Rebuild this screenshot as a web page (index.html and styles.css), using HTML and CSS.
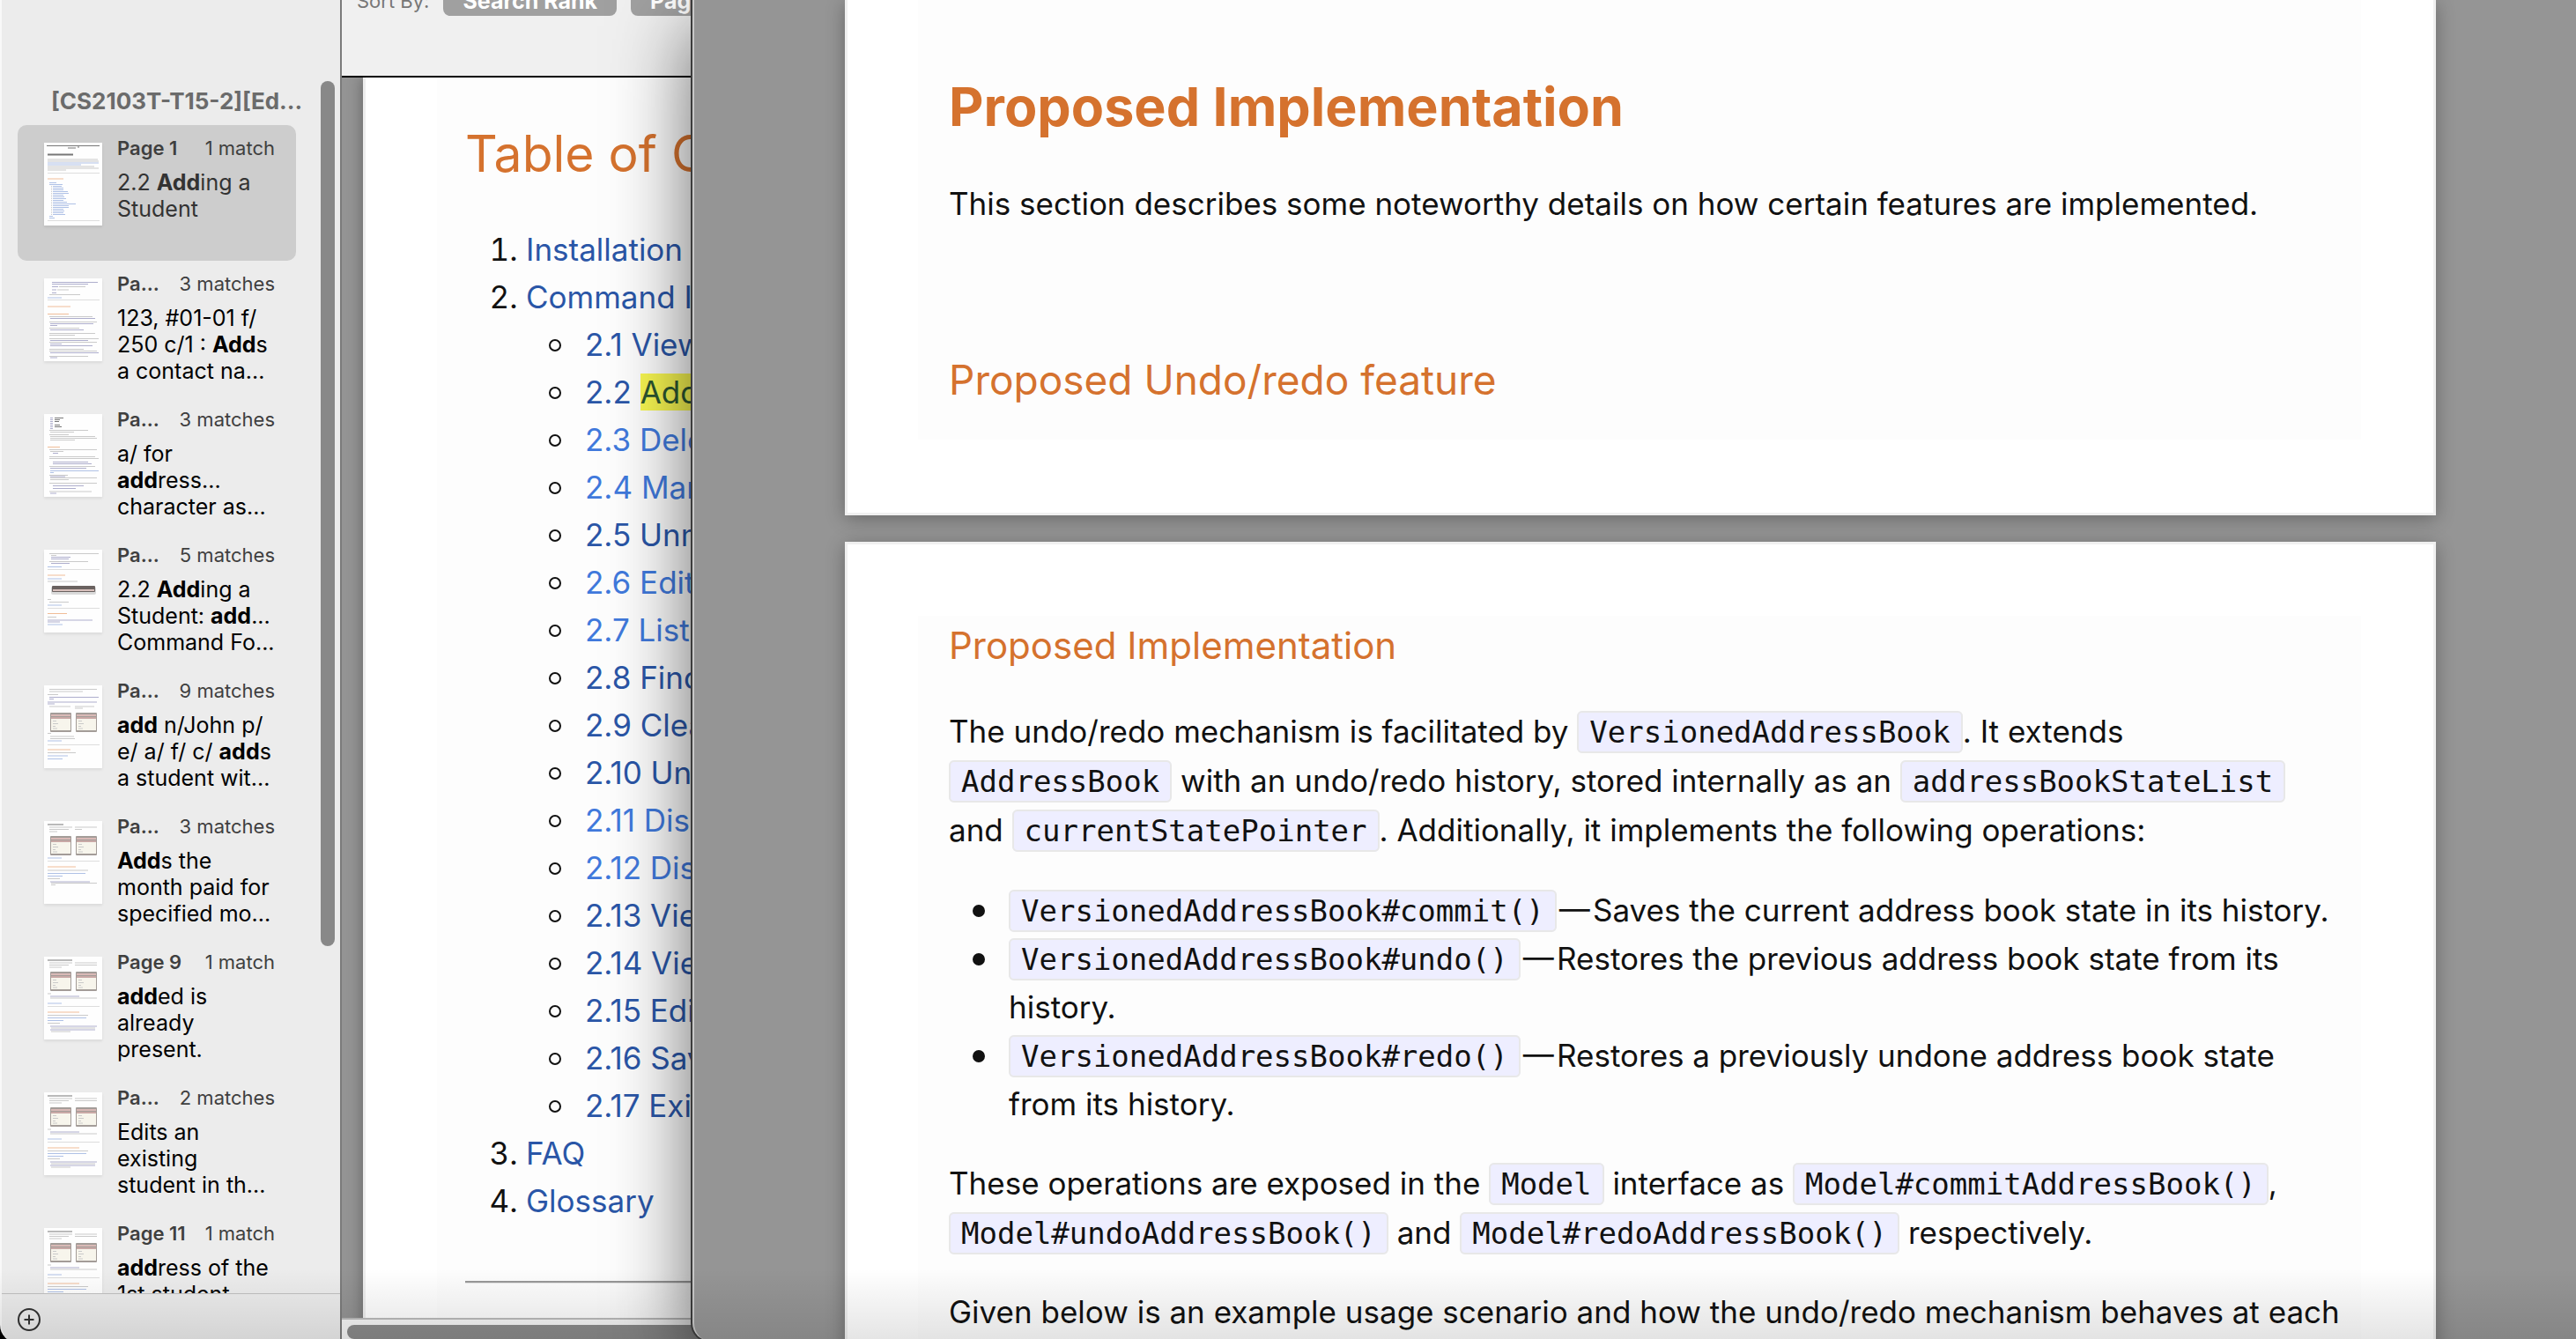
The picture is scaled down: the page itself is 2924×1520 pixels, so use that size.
FILE: index.html
```html
<!DOCTYPE html>
<html lang="en">
<head>
<meta charset="utf-8">
<title>Preview</title>
<link rel="stylesheet" href="styles.css">
</head>
<body>
<svg class="defs" aria-hidden="true">
  <symbol id="thumb-toc" viewBox="0 0 66 94">
    <path class="t-dark" d="M3 3.5H63"/>
    <path class="t-bold" d="M27 6H36M38 5H40"/>
    <path class="t-bold wide" d="M4 13.5H33"/>
    <path class="t-text" d="M4 19H61M4 21H62M4 27H57M4 29H62M4 31H25"/>
    <path class="t-link" d="M4 23H62M4 25H42"/>
    <path class="t-rule" d="M4 34.5H63M4 88.5H63"/>
    <path class="t-head" d="M4 41H22"/>
    <path class="t-link" d="M6 45.5H14M6 47.5H21M10 49.5H20M10 51.5H22M10 53.5H22M10 55.5H27M10 57.5H28M10 59.5H22M10 61.5H23M10 63.5H25M10 65.5H22M10 67.5H26M10 69.5H36M10 71.5H28M10 73.5H28M10 75.5H22M10 77.5H23M10 79.5H22M10 81.5H24M6 83.5H10M6 85.5H12"/>
    <path class="t-text" d="M8 49.5H9M8 51.5H9M8 53.5H9M8 55.5H9M8 57.5H9M8 59.5H9M8 61.5H9M8 63.5H9M8 65.5H9M8 67.5H9M8 69.5H9M8 71.5H9M8 73.5H9M8 75.5H9M8 77.5H9M8 79.5H9M8 81.5H9"/>
  </symbol>
  <symbol id="thumb-text" viewBox="0 0 66 94">
    <path class="t-code" d="M9 4.500H61M9 6.500H50M9 9.500H16M9 13H14M9 16.500H14"/>
    <path class="t-text" d="M17 9.500H47M15 13H28M6 18.500H41"/>
    <path class="t-link" d="M4 22H20"/>
    <path class="t-rule" d="M4 24.500H63"/>
    <path class="t-head" d="M4 32H30M4 40.500H28"/>
    <path class="t-text" d="M6 43.500H55M6 49.500H60M6 56.500H40M6 62.500H58M6 64.500H35M6 68.500H62M6 72.500H60M6 80.500H45M6 82.500H60M6 88.500H50"/>
    <path class="t-code" d="M7 45.500H58M7 51.500H56M7 53.500H15M7 58.500H45M7 70.500H50M7 74.500H20M7 76.500H55M7 84.500H62M7 90H15"/>
  </symbol>
  <symbol id="thumb-notes" viewBox="0 0 66 94">
    <path class="t-code" d="M7 4.500H10M7 6.500H10M7 8.500H10M7 10.500H10M7 12.500H10M7 14.500H10M7 16.500H10"/>
    <path class="t-bold" d="M12 4.500H22M12 6.500H18M12 8.500H17M12 12.500H18M12 14.500H20"/>
    <path class="t-text" d="M6 18.500H50M7 20.500H34M6 23.500H28M7 25.500H58M7 27.500H60M7 29.500H35"/>
    <path class="t-head" d="M4 37.500H18"/>
    <path class="t-text" d="M6 40.500H60M7 42.500H22M6 48.500H58M6 50.500H62M6 59.500H58M6 69.500H27M7 72.500H60M7 74.500H28M6 78.500H60M6 88H54"/>
    <path class="t-code" d="M10 44.500H16M10 54.500H50M10 56.500H54M7 61.500H48M7 71H24M10 81.500H45M10 84.500H36M7 90H14"/>
    <path class="t-link" d="M7 64.500H62M7 66.500H11"/>
  </symbol>
  <symbol id="thumb-bar" viewBox="0 0 66 94">
    <path class="t-text" d="M6 4.500H62M8 6.500H14M6 13.500H50"/>
    <path class="t-code" d="M8 8.500H30M8 10.500H28M8 15.500H29"/>
    <path class="t-link" d="M4 19.500H20M4 33H20M4 63H20M4 85H21"/>
    <path class="t-rule" d="M4 22.500H63M4 66.500H63"/>
    <path class="t-head" d="M4 29H24M4 72.500H26"/>
    <path class="t-text" d="M4 36H38M4 56.500H8M6 59.500H28M4 76.500H14"/>
    <rect x="8" y="42" width="51" height="9" rx="2" fill="#999" opacity=".35"/>
    <rect x="9" y="41" width="49" height="7" rx="1" fill="#6a6260"/>
    <path d="M10 46H57" stroke="#d8c0bc" stroke-width="2"/>
    <path class="t-code" d="M4 80H55M4 82H18"/>
  </symbol>
  <symbol id="windows" viewBox="0 0 66 24">
    <g id="mini-window">
      <rect x="7" y="1" width="24" height="22" rx="1" fill="#a39c98"/>
      <rect x="8" y="3" width="22" height="2" fill="#d9b9b6"/>
      <rect x="8" y="6" width="22" height="2" fill="#c9a8a6"/>
      <rect x="8" y="8" width="22" height="13" fill="#f7f5ec"/>
      <path class="t-text" d="M10 10.500H14M10 13.500H16M10 16.500H13M10 19H15"/>
    </g>
    <use href="#mini-window" x="29"/>
  </symbol>
  <symbol id="thumb-shots-a" viewBox="0 0 66 94">
    <path class="t-text" d="M6 4.500H60M6 7H44M4 10.500H16M6 24H30M35 24H57M35 26H44M4 54.500H8M7 58H34M7 60.500H35M4 76.500H36"/>
    <path class="t-code" d="M6 13.500H62M6 15.500H11M4 19H60M4 21H12"/>
    <use href="#windows" y="30" width="66" height="24"/>
    <path class="t-link" d="M4 63H20M4 80H27M4 83.500H21"/>
    <path class="t-rule" d="M4 67.500H63"/>
    <path class="t-head" d="M4 73H30"/>
  </symbol>
  <symbol id="thumb-shots-b" viewBox="0 0 66 94">
    <path class="t-bold" d="M4 4H22"/>
    <path class="t-text" d="M6 7H32M35 7H60M6 9.500H28M35 9.500H43M6 12H15M4 56H50M4 65.500H18M8 70.500H60M8 72.500H13"/>
    <use href="#windows" y="16" width="66" height="24"/>
    <path class="t-link" d="M4 42H20M4 59.500H47M4 62.500H21"/>
    <path class="t-rule" d="M4 45.500H63"/>
    <path class="t-head" d="M4 52H36"/>
    <path class="t-code" d="M7 69H52"/>
  </symbol>
  <symbol id="thumb-shots-c" viewBox="0 0 66 94">
    <path class="t-bold" d="M4 4H32"/>
    <path class="t-text" d="M6 7H32M35 7H60M6 9.500H28M35 9.500H60M6 12H20M4 42H8M7 47H60M4 66.500H50M4 75.500H18M8 81H58M8 85H30"/>
    <use href="#windows" y="16" width="66" height="24"/>
    <path class="t-link" d="M4 53H20M4 69.500H48M4 72.500H22"/>
    <path class="t-rule" d="M4 56.500H63"/>
    <path class="t-head" d="M4 63H40"/>
    <path class="t-code" d="M7 45H40M7 79H60M7 83H58"/>
  </symbol>
</svg>

<div class="back-window">
  <aside class="sidebar">
    <div class="results">
      <h2 class="doc-name">[CS2103T-T15-2][Ed...</h2>
      <button class="result selected">
        <svg class="thumb"><use href="#thumb-toc"/></svg>
        <span class="info"><span class="meta"><b>Page 1</b><span>1 match</span></span>
        <span class="snippet">2.2 <b>Add</b>ing a<br>Student</span></span>
      </button>
      <button class="result">
        <svg class="thumb"><use href="#thumb-text"/></svg>
        <span class="info"><span class="meta"><b>Pa...</b><span>3 matches</span></span>
        <span class="snippet">123, #01-01 f/<br>250 c/1 : <b>Add</b>s<br>a contact na...</span></span>
      </button>
      <button class="result">
        <svg class="thumb"><use href="#thumb-notes"/></svg>
        <span class="info"><span class="meta"><b>Pa...</b><span>3 matches</span></span>
        <span class="snippet">a/ for<br><b>add</b>ress...<br>character as...</span></span>
      </button>
      <button class="result">
        <svg class="thumb"><use href="#thumb-bar"/></svg>
        <span class="info"><span class="meta"><b>Pa...</b><span>5 matches</span></span>
        <span class="snippet">2.2 <b>Add</b>ing a<br>Student: <b>add</b>...<br>Command Fo...</span></span>
      </button>
      <button class="result">
        <svg class="thumb"><use href="#thumb-shots-a"/></svg>
        <span class="info"><span class="meta"><b>Pa...</b><span>9 matches</span></span>
        <span class="snippet"><b>add</b> n/John p/<br>e/ a/ f/ c/ <b>add</b>s<br>a student wit...</span></span>
      </button>
      <button class="result">
        <svg class="thumb"><use href="#thumb-shots-b"/></svg>
        <span class="info"><span class="meta"><b>Pa...</b><span>3 matches</span></span>
        <span class="snippet"><b>Add</b>s the<br>month paid for<br>specified mo...</span></span>
      </button>
      <button class="result">
        <svg class="thumb"><use href="#thumb-shots-c"/></svg>
        <span class="info"><span class="meta"><b>Page 9</b><span>1 match</span></span>
        <span class="snippet"><b>add</b>ed is<br>already<br>present.</span></span>
      </button>
      <button class="result">
        <svg class="thumb"><use href="#thumb-shots-c"/></svg>
        <span class="info"><span class="meta"><b>Pa...</b><span>2 matches</span></span>
        <span class="snippet">Edits an<br>existing<br>student in th...</span></span>
      </button>
      <button class="result">
        <svg class="thumb"><use href="#thumb-shots-c"/></svg>
        <span class="info"><span class="meta"><b>Page 11</b><span>1 match</span></span>
        <span class="snippet"><b>add</b>ress of the<br>1st student</span></span>
      </button>
    </div>
    <div class="scroll-thumb"></div>
    <footer class="sidebar-footer">
      <button class="add" aria-label="Add">
        <svg viewBox="0 0 26 26"><circle cx="13" cy="13" r="12"/><path d="M13 7.500V18.500M7.500 13H18.500"/></svg>
      </button>
    </footer>
  </aside>

  <main class="reader">
    <div class="toolbar">
      <span class="sort-label">Sort By:</span>
      <button class="sort">Search Rank</button>
      <button class="sort">Page Order</button>
    </div>
    <div class="canvas">
      <article class="guide">
        <div class="guide-body">
          <h1>Table of Contents</h1>
          <ol>
            <li><a href="#">Installation</a></li>
            <li><a href="#">Command Instructions</a>
              <ul>
                <li><a href="#">2.1 Viewing help</a></li>
                <li><a href="#">2.2 <mark>Add</mark>ing a Student</a></li>
                <li><a href="#" class="light">2.3 Deleting a Student</a></li>
                <li><a href="#" class="light">2.4 Marking a payment</a></li>
                <li><a href="#">2.5 Unmarking a payment</a></li>
                <li><a href="#" class="light">2.6 Editing a Student</a></li>
                <li><a href="#" class="light">2.7 Listing all Students</a></li>
                <li><a href="#">2.8 Finding a Student</a></li>
                <li><a href="#">2.9 Clearing all data</a></li>
                <li><a href="#">2.10 Undoing a command</a></li>
                <li><a href="#" class="light">2.11 Displaying payments</a></li>
                <li><a href="#" class="light">2.12 Displaying fees</a></li>
                <li><a href="#">2.13 Viewing a Student</a></li>
                <li><a href="#">2.14 Viewing history</a></li>
                <li><a href="#">2.15 Editing the data file</a></li>
                <li><a href="#">2.16 Saving the data</a></li>
                <li><a href="#">2.17 Exiting the program</a></li>
              </ul>
            </li>
            <li><a href="#">FAQ</a></li>
            <li><a href="#">Glossary</a></li>
          </ol>
          <hr>
        </div>
      </article>
    </div>
    <div class="h-track"><div class="h-thumb"></div></div>
  </main>
</div>

<section class="front-window">
  <article class="sheet first">
    <div class="sheet-body">
      <h1>Proposed Implementation</h1>
      <p>This section describes some noteworthy details on how certain features are implemented.</p>
      <h2>Proposed Undo/redo feature</h2>
    </div>
  </article>
  <article class="sheet second">
    <div class="sheet-body">
      <h3>Proposed Implementation</h3>
      <p>The undo/redo mechanism is facilitated by <code>VersionedAddressBook</code>. It extends<br>
        <code>AddressBook</code> with an undo/redo history, stored internally as an <code>addressBookStateList</code><br>
        and <code>currentStatePointer</code>. Additionally, it implements the following operations:</p>
      <ul>
        <li><code>VersionedAddressBook#commit()</code>&#8202;—&#8202;Saves the current address book state in its history.</li>
        <li><code>VersionedAddressBook#undo()</code>&#8202;—&#8202;Restores the previous address book state from its<br>history.</li>
        <li><code>VersionedAddressBook#redo()</code>&#8202;—&#8202;Restores a previously undone address book state<br>from its history.</li>
      </ul>
      <p>These operations are exposed in the <code>Model</code> interface as <code>Model#commitAddressBook()</code>,<br>
        <code>Model#undoAddressBook()</code> and <code>Model#redoAddressBook()</code> respectively.</p>
      <p>Given below is an example usage scenario and how the undo/redo mechanism behaves at each</p>
    </div>
  </article>
</section>
<div class="dock-shade"></div>
</body>
</html>
```

FILE: styles.css
```css
*, *::before { box-sizing: border-box; }

body {
  margin: 0;
  height: 100vh;
  overflow: hidden;
  position: relative;
  background: #000;
  color: #111;
  font-family: Inter, "Liberation Sans", sans-serif;
}

h1, h2, h3, p, ol, ul { margin: 0; padding: 0; }
button { font: inherit; color: inherit; border: 0; background: none; padding: 0; text-align: left; }
a { color: #2a56a7; text-decoration: none; }
a.light { color: #4079dc; }

.defs { position: absolute; width: 0; height: 0; }

/* Page thumbnails */
.t-text, .t-bold, .t-code, .t-link, .t-head { fill: none; stroke-width: 1; }
.t-text { stroke: #cacaca; }
.t-bold { stroke: #777; }
.t-bold.wide { stroke-width: 2; }
.t-code { stroke: #aeaecd; }
.t-link { stroke: #afc1e6; }
.t-head { stroke: #f0bd98; }
.t-dark { stroke: #777; }
.t-rule { stroke: #ddd; }

/* Back window: search results and table of contents */
.back-window {
  position: absolute;
  inset: 0 0 -4px 0;
  padding-bottom: 4px;
  display: flex;
  overflow: hidden;
  border-left: 2px solid #f9f9f9;
  border-bottom-left-radius: 20px;
  background: #ececec;
}

.sidebar {
  position: relative;
  flex: none;
  width: 386px;
  display: flex;
  flex-direction: column;
  border-right: 2px solid #7b7b7b;
  background: #ececec;
}
.results { flex: 1; min-height: 0; overflow: hidden; padding: 100px 50px 0 18px; }
.doc-name {
  margin: 0 0 12px 38px;
  white-space: nowrap;
  font-size: 26px;
  line-height: 30px;
  font-weight: 700;
  color: #6b6b6b;
}
.result {
  display: flex;
  width: 100%;
  height: 154px;
  padding: 12px 24px 0 30px;
  gap: 17px;
  align-items: flex-start;
  border-radius: 10px;
  color: #000;
}
.result.selected { background: #cdcdcd; color: #333; }
.thumb { flex: none; width: 66px; height: 94px; margin-top: 8px; background: #fefefe; box-shadow: 0 2px 3px rgba(0, 0, 0, .08); }
.info { flex: 1; display: flex; flex-direction: column; gap: 10px; white-space: nowrap; }
.meta { display: flex; justify-content: space-between; font-size: 22px; line-height: 28px; color: #3f3f3f; }
.meta b { font-weight: 600; }
.snippet { font-size: 25px; line-height: 30px; }
.scroll-thumb { position: absolute; top: 92px; right: 6px; width: 16px; height: 982px; border-radius: 8px; background: #888; }
.sidebar-footer { flex: none; height: 52px; padding: 16px 18px; border-top: 1px solid #c2c2c2; background: #ececec; }
.add svg { display: block; width: 26px; height: 26px; fill: none; stroke: #333; stroke-width: 2; }

.reader { flex: 1; min-width: 0; display: flex; flex-direction: column; }
.toolbar {
  flex: none;
  display: flex;
  gap: 16px;
  align-items: flex-start;
  height: 88px;
  overflow: hidden;
  padding-left: 17px;
  border-bottom: 2px solid #000;
  background: #f0f0f0;
  white-space: nowrap;
}
.toolbar > * { margin-top: -16px; line-height: 34px; }
.sort-label { font-size: 22px; color: #777; }
.sort { height: 34px; padding: 0 22px; border-radius: 8px; background: #a0a0a0; color: #fff; font-size: 25px; font-weight: 700; }

.canvas { flex: 1; min-height: 0; overflow: hidden; padding-left: 24px; background: #949494; }
.guide { min-height: 100%; padding-left: 81px; border-left: 3px solid #eee; background: #fff; box-shadow: 0 0 16px rgba(0, 0, 0, .35); }
.guide-body { padding: 51px 0 200px 32px; background: #fdfdfd; white-space: nowrap; }
.guide-body h1 { margin-bottom: 45px; font-size: 57px; line-height: 72px; font-weight: 400; color: #d5722e; }
.guide-body ol { padding-left: 69px; font-size: 35px; line-height: 54px; }
.guide-body ul { padding-left: 67px; list-style: none; }
ul > li::before {
  content: "";
  display: inline-block;
  width: 14px;
  height: 14px;
  margin: 0 27px 0 -41px;
  vertical-align: 5px;
  border: 2px solid #111;
  border-radius: 50%;
}
mark { background: #f8f751; color: #2c5631; }
.guide-body hr { margin: 64px 0 0; border: 0; border-top: 2px solid #999; border-bottom: 1px solid #e4e4e4; }
.h-track { flex: none; height: 24px; padding: 6px 0 0 6px; border-top: 2px solid #bbb; background: #f5f5f5; }
.h-thumb { height: 16px; border-radius: 8px; background: #8a8a8a; }

/* Front window: developer guide */
.front-window {
  position: absolute;
  inset: 0 0 -2px 786px;
  overflow: hidden;
  padding: 0 159px 0 171px;
  border-left: 2px solid #c8c8c8;
  border-bottom-left-radius: 20px;
  background: #959595;
  box-shadow: 0 0 0 2px #3c3c3c, 0 30px 90px rgba(0, 0, 0, .6);
}
.sheet { padding: 0 82px 0 80px; border: 3px solid #f0f0f0; background: #fff; box-shadow: 0 4px 20px rgba(0, 0, 0, .3); }
.sheet.first { margin-bottom: 30px; padding-bottom: 83px; border-top: 0; }
.sheet.second { padding-top: 81px; }
.sheet-body { padding-left: 35px; background: #fdfdfd; font-size: 35px; line-height: 56px; white-space: nowrap; }
.first .sheet-body { padding-top: 84px; padding-bottom: 38px; }
.second .sheet-body { padding-top: 8px; padding-bottom: 80px; }
.sheet h1, .sheet h2, .sheet h3 { color: #d5722e; font-weight: 400; }
.sheet h1 { margin-bottom: 45px; font-size: 61px; line-height: 74px; font-weight: 700; }
.sheet h2 { margin-top: 142px; font-size: 46px; line-height: 60px; }
.sheet h3 { margin-bottom: 43px; font-size: 42px; line-height: 52px; }
.sheet ul { margin: 36px 0 34px; padding-left: 68px; list-style: none; line-height: 55px; }
.sheet ul > li::before { border-width: 7px; }
.sheet p + p { margin-top: 34px; }
code {
  padding: 2px 12px;
  border: 2px solid #e8e8e8;
  border-radius: 6px;
  background: #eeeeff;
  font-family: "DejaVu Sans Mono", "Liberation Mono", monospace;
  font-size: 34px;
  line-height: 1;
}

.dock-shade {
  position: absolute;
  inset: auto 0 0 0;
  height: 80px;
  pointer-events: none;
  background: linear-gradient(to bottom, transparent, rgba(0, 0, 0, .1));
}
```
